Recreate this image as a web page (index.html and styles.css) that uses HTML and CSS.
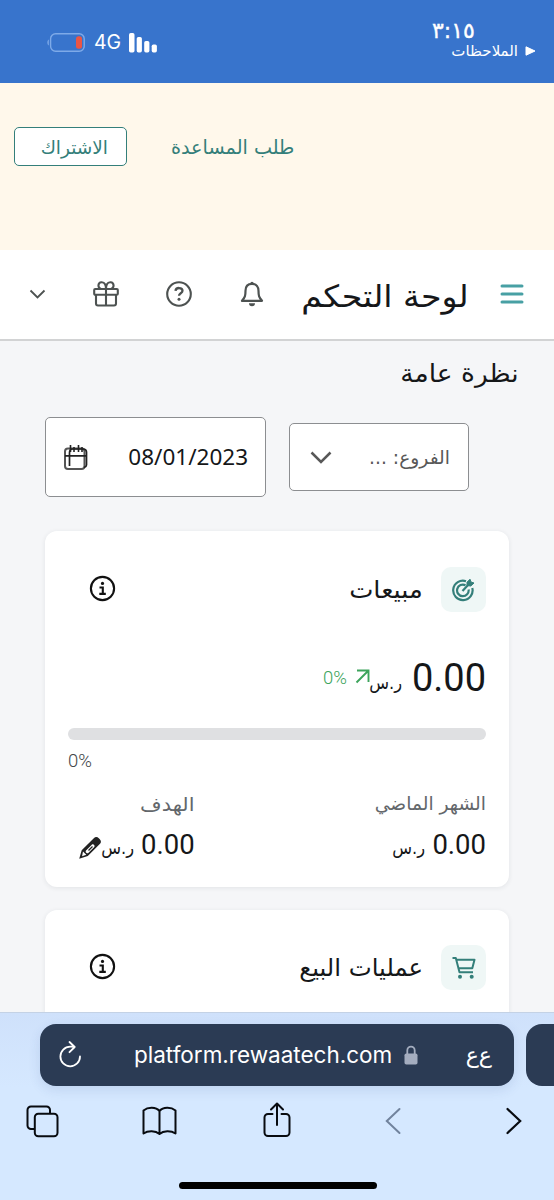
FILE: index.html
```html
<!DOCTYPE html>
<html lang="ar">
<head>
<meta charset="utf-8">
<title>لوحة التحكم</title>
<link rel="stylesheet" href="styles.css">
</head>
<body>
<div class="screen">
  <header class="status">
    <div class="signals">
      <svg width="38" height="20" viewBox="0 0 38 20"><rect x="3.600" y=".8" width="33.600" height="17.500" rx="5" fill="none" stroke="#7eaae8" stroke-width="1.400"/><path d="M1.800 6.500v6c-1.800-.6-2-5.200 0-6z" fill="#7eaae8"/><rect x="29" y="3.300" width="6" height="12.500" rx="2.500" fill="#ea5545"/></svg>
      <span class="network">4G</span>
      <svg width="29" height="20" viewBox="0 0 29 20" fill="#fff"><rect x="0" y="0" width="5.500" height="19.500" rx="1.700"/><rect x="7.700" y="4" width="5.200" height="15.500" rx="1.700"/><rect x="15.200" y="8" width="5.200" height="11.500" rx="1.700"/><rect x="22.700" y="11.500" width="5.200" height="8" rx="1.700"/></svg>
    </div>
    <div class="clock">
      <span class="time">٣:١٥</span>
      <span class="return"><span class="return-app" dir="rtl">الملاحظات</span><svg width="11" height="10" viewBox="0 0 11 10"><path d="M1 .8L10 5 1 9.200z" fill="#fff" stroke="#fff" stroke-linejoin="round"/></svg></span>
    </div>
  </header>

  <section class="banner">
    <a class="subscribe"><span class="t t-subscribe" dir="rtl">الاشتراك</span></a>
    <a class="help-link"><span class="t t-help" dir="rtl">طلب المساعدة</span></a>
  </section>

  <nav class="topbar">
    <svg class="i-chevron" width="17" height="11" viewBox="0 0 17 11"><path d="M1.500 1.500l7 7 7-7" fill="none" stroke="#4d5251" stroke-width="1.800"/></svg>
    <svg class="i-gift" width="26" height="26" viewBox="0 0 26 26" fill="none" stroke="#4d5251" stroke-width="2.100"><rect x="1.200" y="8" width="23.600" height="5.800" rx="1"/><path d="M3 14v8.500a2 2 0 002 2h16a2 2 0 002-2V14M13 8v16.500M13 8H8C4.500 7 4.500 1.500 8.500 1.200 12 1 13 4.500 13 8zm0 0h5c3.500-1 3.500-6.500-.5-6.800C14 1 13 4.500 13 8z"/></svg>
    <svg class="i-help" width="26" height="26" viewBox="0 0 26 26" fill="none" stroke="#4d5251" stroke-width="2.100"><circle cx="13" cy="13" r="11.800"/><path d="M9.500 9.800c.3-3.800 7-3.600 7 0 0 2.600-3.500 2.400-3.500 5" stroke-width="2.300"/><circle cx="13" cy="18.300" r="1.500" fill="#4d5251" stroke="none"/></svg>
    <svg class="i-bell" width="24" height="26" viewBox="0 0 24 26"><path d="M12 2.800c-4.500 0-6.500 3.200-6.500 7 0 5-.5 6.500-3.500 10h20c-3-3.500-3.500-5-3.500-10 0-3.800-2-7-6.500-7z" fill="none" stroke="#4d5251" stroke-width="2.200" stroke-linejoin="round"/><path d="M10.300 2.500a1.700 1.700 0 013.400 0zM9 22.300h6a3 3 0 01-6 0z" fill="#4d5251"/></svg>
    <h1><span class="t t-title" dir="rtl">لوحة التحكم</span></h1>
    <svg class="i-menu" width="24" height="20" viewBox="0 0 24 20"><path d="M2 2h20M2 10h20M2 18h20" stroke="#48a0a4" stroke-width="3" stroke-linecap="round"/></svg>
  </nav>

  <main>
    <h2><span class="t t-overview" dir="rtl">نظرة عامة</span></h2>
    <div class="filters">
      <div class="date">
        <svg width="26" height="27" viewBox="0 0 26 27" fill="none"><rect x="2" y="4.500" width="19.500" height="20.500" rx="3" stroke="#555" stroke-width="2"/><path d="M6.500 22V9c0-3 1-4 3-4H20c2.500 0 3.500 1 3.500 3v13c0 1.500-1 2-2.500 2.500M2 11.800h21.500" stroke="#222" stroke-width="1.700"/><path d="M7.500 1v7M11 3v5M15.500 1v7M19 3v5" stroke="#222" stroke-width="1.600"/></svg>
        <span class="date-value">08/01/2023</span>
      </div>
      <div class="branches">
        <svg width="22" height="13" viewBox="0 0 22 13"><path d="M1.500 1.500l9.500 9.500 9.500-9.500" fill="none" stroke="#585858" stroke-width="2.500"/></svg>
        <span class="t t-branches" dir="rtl">الفروع: ...</span>
      </div>
    </div>

    <article class="card sales">
      <div class="card-head">
        <svg width="27" height="27" viewBox="0 0 27 27"><circle cx="13.500" cy="13.500" r="11.600" fill="none" stroke="#111" stroke-width="2.100"/><circle cx="13.500" cy="8.400" r="1.600" fill="#111"/><path d="M10.500 12.500h3.300v6.200M10.300 18.900h6.500" fill="none" stroke="#111" stroke-width="2.100"/></svg>
        <h3><span class="t t-sales" dir="rtl">مبيعات</span></h3>
        <div class="tile"><svg width="23" height="24" viewBox="0 0 23 24" fill="none" stroke="#347f7a" stroke-width="2.200"><path d="M14 3.200A9.700 9.700 0 1020.300 10M13.500 7.200A5.800 5.800 0 1016.600 11.500M10.500 13l6-6.500"/><path d="M15 7.500V4.200l3-3 1 2.800 3 1-3.200 3z" fill="#347f7a" stroke-width="1"/></svg></div>
      </div>
      <div class="amount">
        <span class="percent up">0%</span>
        <svg width="15" height="15" viewBox="0 0 15 15"><path d="M2 1.500h11.500V13M13.500 1.500l-12 12" fill="none" stroke="#3da45c" stroke-width="1.900"/></svg>
        <span class="t t-currency big" dir="rtl">ر.س</span>
        <span class="number">0.00</span>
      </div>
      <div class="progress"></div>
      <div class="percent done">0%</div>
      <div class="stats">
        <div class="stat goal">
          <div class="label"><span class="t t-goal" dir="rtl">الهدف</span></div>
          <div class="value">
            <svg width="24" height="24" viewBox="0 0 24 24"><path d="M1.200 22.800l2.500-8.600L15.800 2.200c1.500-1.500 3.500-1.500 5 0l1 1c1.500 1.500 1.500 3.300 0 4.800L9.800 20z" fill="#222"/><path d="M5 15.500l3.300 3.300-4.200 1.500z" fill="#fff"/><path d="M8 14.500l6-6c1.200-1 3.500 1 2.300 2.500l-6 6c-1.500 1.200-3.500-1-2.300-2.500z" fill="#fff"/><path d="M10.500 14.500l4-4" stroke="#222" stroke-width="1.300"/></svg>
            <span class="t t-currency" dir="rtl">ر.س</span><span class="number">0.00</span>
          </div>
        </div>
        <div class="stat">
          <div class="label"><span class="t t-month" dir="rtl">الشهر الماضي</span></div>
          <div class="value"><span class="t t-currency" dir="rtl">ر.س</span><span class="number">0.00</span></div>
        </div>
      </div>
    </article>

    <article class="card orders">
      <div class="card-head">
        <svg width="27" height="27" viewBox="0 0 27 27"><circle cx="13.500" cy="13.500" r="11.600" fill="none" stroke="#111" stroke-width="2.100"/><circle cx="13.500" cy="8.400" r="1.600" fill="#111"/><path d="M10.500 12.500h3.300v6.200M10.300 18.900h6.500" fill="none" stroke="#111" stroke-width="2.100"/></svg>
        <h3><span class="t t-orders" dir="rtl">عمليات البيع</span></h3>
        <div class="tile"><svg width="24" height="24" viewBox="0 0 24 24" fill="none" stroke="#347f7a" stroke-width="2"><path d="M.5 2h3.300l3.700 14.200h13.500M4.600 3.800h17.900L20.300 12.300H6.600" stroke-linejoin="round"/><circle cx="8" cy="20.800" r="2" fill="#347f7a" stroke="none"/><circle cx="19.700" cy="20.800" r="2" fill="#347f7a" stroke="none"/></svg></div>
      </div>
    </article>
  </main>

  <footer class="browser">
    <div class="tabs">
      <div class="address">
        <svg class="i-reload" width="23" height="27" viewBox="0 0 23 27"><path d="M13.500 5.700H11.200A9.800 9.800 0 1021 15.500M10.500 1l5.200 5-5.200 5.200" fill="none" stroke="#fff" stroke-width="1.800" stroke-linecap="round" stroke-linejoin="round"/></svg>
        <span class="url">platform.rewaatech.com</span>
        <svg class="i-lock" width="14" height="20" viewBox="0 0 14 20"><rect x=".5" y="8.500" width="13" height="11" rx="1.800" fill="#a4adbf"/><path d="M3.300 9V5.500a3.700 3.900 0 017.400 0V9" fill="none" stroke="#a4adbf" stroke-width="1.800"/></svg>
        <span class="t t-reader" dir="rtl">ع‌ع</span>
      </div>
      <div class="next-tab"></div>
    </div>
    <div class="tools">
      <svg class="i-tabs" width="33" height="33" viewBox="0 0 33 33" fill="none" stroke="#080b10" stroke-width="2"><path d="M8.800 24H5a3.500 3.500 0 01-3.500-3.500V5A3.500 3.500 0 015 1.500h15.500A3.500 3.500 0 0124 5v3.800"/><rect x="8.800" y="8.800" width="22.700" height="22.500" rx="3.500"/></svg>
      <svg class="i-book" width="35" height="30" viewBox="0 0 35 30" fill="none" stroke="#080b10" stroke-width="2" stroke-linejoin="round"><path d="M17.500 5C14 .8 6 .8 1.500 4.500v23c4.500-3 12-3 16 .5 4-3.500 11.500-3.500 16-.5v-23C29 .8 21 .8 17.500 5zM17.500 5v23"/></svg>
      <svg class="i-share" width="28" height="36" viewBox="0 0 28 36" fill="none" stroke="#080b10" stroke-width="2" stroke-linecap="round" stroke-linejoin="round"><path d="M9.500 12H5a3.500 3.500 0 00-3.500 3.500v15A3.500 3.500 0 005 34h18a3.500 3.500 0 003.500-3.500v-15A3.500 3.500 0 0023 12h-4.500M14 23V1.800M8 7.500l6-6 6 6"/></svg>
      <svg class="i-back" width="16" height="28" viewBox="0 0 16 28"><path d="M14.500 2L1.800 14l12.700 12" fill="none" stroke="#71839d" stroke-width="2" stroke-linecap="round"/></svg>
      <svg class="i-forward" width="16" height="28" viewBox="0 0 16 28"><path d="M1.500 2l12.700 12L1.500 26" fill="none" stroke="#080b10" stroke-width="2.200" stroke-linecap="round"/></svg>
    </div>
    <div class="home"></div>
  </footer>
</div>
</body>
</html>
```
FILE: styles.css
```css
* { box-sizing: border-box; }
body { margin: 0; font-family: Roboto, "DejaVu Sans", sans-serif; color: #151719; direction: ltr; }
h1, h2, h3 { margin: 0; font-weight: 400; }
svg { display: block; flex: none; }
.screen { width: 554px; height: 1200px; display: flex; flex-direction: column; overflow: hidden; background: #f5f6f8; }
.t { display: inline-block; white-space: nowrap; font-family: "DejaVu Sans", sans-serif; transform-origin: right center; }

.status { height: 83px; flex: none; background: #3874cc; color: #fff; display: flex; justify-content: space-between; padding: 0 18px 0 47px; }
.signals { display: flex; padding-top: 33px; }
.network { font: 19.500px/19px Inter, sans-serif; width: 44px; padding-left: 9px; }
.clock { display: flex; flex-direction: column; align-items: flex-start; width: 104px; padding-top: 18px; }
.time { font: 22px/25px "DejaVu Sans", sans-serif; white-space: nowrap; -webkit-text-stroke: .4px #fff; }
.return { display: flex; align-items: center; align-self: flex-end; gap: 7px; line-height: 16px; }
.return-app { font: 15px/16px "DejaVu Sans", sans-serif; }

.banner { height: 167px; flex: none; background: #fff8eb; color: #347f7a; display: flex; align-items: flex-start; padding: 44px 0 0 14px; gap: 44px; }
.subscribe { width: 113px; height: 39px; border: 1.500px solid #347f7a; border-radius: 5px; background: #fff; display: flex; align-items: center; justify-content: flex-end; padding: 2px 18px 0 0; }
.help-link { height: 39px; display: flex; align-items: center; padding-top: 2px; }
.t-subscribe { font-size: 18.500px; }
.t-help { font-size: 19.200px; }

.topbar { height: 91px; flex: none; background: #fff; border-bottom: 2px solid #d2d3d4; display: flex; align-items: center; padding: 0 30px 1px 29px; }
.i-gift { margin-left: 47px; }
.i-help { margin-left: 47px; }
.i-bell { margin-left: 48px; }
.topbar h1 { width: 216px; padding: 3px 11px 0 0; text-align: right; }
.i-menu { margin-left: 20px; }
.t-title { font-size: 30.500px; transform: scaleX(1.09); }

main { flex: 1; min-height: 0; overflow: hidden; padding: 0 45px; }
main h2 { height: 76px; line-height: 66px; text-align: right; margin-right: -10px; }
.t-overview { font-size: 25px; transform: scaleX(1.06); }
.filters { display: flex; align-items: center; gap: 23px; height: 80px; }
.date { width: 221px; height: 80px; border: 1.500px solid #8c8e91; border-radius: 5px; background: #fff; display: flex; align-items: center; justify-content: space-between; padding: 0 17px; }
.date-value { font: 22.500px/30px "Noto Sans", sans-serif; }
.branches { width: 180px; height: 68px; border: 1.500px solid #8c8e91; border-radius: 5px; background: #fff; color: #585858; display: flex; align-items: center; justify-content: space-between; padding: 0 18px 0 20px; }
.t-branches { font-size: 18.700px; }

.card { background: #fff; border-radius: 12px; box-shadow: 0 1px 5px rgba(30, 40, 60, .09); width: 464px; }
.sales { height: 356px; margin-top: 34px; padding: 36px 23px 0; }
.orders { height: 160px; margin-top: 23px; padding: 35px 23px 0; }
.card-head { display: flex; align-items: center; height: 45px; padding-left: 21px; }
.card-head > svg { margin-top: -2px; }
.card-head h3 { flex: 1; text-align: right; padding-right: 18px; }
.tile { width: 45px; height: 45px; border-radius: 10px; background: #eff7f6; display: flex; align-items: center; justify-content: center; }
.t-sales { font-size: 24px; transform: scaleX(1.07); }
.t-orders { font-size: 24px; transform: scaleX(1.015); }
.amount { height: 116px; display: flex; justify-content: flex-end; padding-top: 36px; }
.amount .number { font: 38px/60px Roboto, sans-serif; }
.amount svg { margin: 21px 0 0 8px; }
.t-currency { width: 32px; font-size: 18px; transform: scaleX(.9); }
.t-currency.big { line-height: 69px; margin-right: 10px; }
.percent { font: 18.500px/24px Roboto, sans-serif; font-weight: 300; }
.up { color: #3da45c; padding-top: 18px; }
.progress { height: 12px; border-radius: 6px; background: #dfe0e2; }
.done { color: #424648; padding-top: 9px; }
.stats { display: flex; justify-content: space-between; padding: 16px 0 0 10px; }
.label { text-align: right; color: #63676b; height: 30px; line-height: 30px; }
.t-goal { font-size: 19px; transform: scaleX(1.1); }
.t-month { font-size: 18.700px; }
.value { display: flex; align-items: center; justify-content: flex-end; height: 52px; }
.value svg { margin-top: 6px; }
.value .t-currency { margin-top: 4px; }
.value .number { font: 27.500px/50px Roboto, sans-serif; margin-left: 7px; }

.browser { height: 188px; flex: none; background: linear-gradient(#cfe1fb, #d5e8ff 40%); border-top: 1px solid #c4d2e5; padding-top: 11px; }
.tabs { display: flex; gap: 12px; padding-left: 40px; }
.address { width: 474px; height: 62px; flex: none; border-radius: 16px; background: #2b3b54; color: #fff; display: flex; align-items: center; padding: 0 22px 0 19px; box-shadow: 0 4px 12px rgba(50, 80, 140, .13); }
.next-tab { width: 28px; height: 62px; border-radius: 16px 0 0 16px; background: #2b3b54; }
.url { font: 22.500px/30px Inter, sans-serif; width: 260px; margin-left: 52px; white-space: nowrap; }
.i-reload { margin-top: -2px; }
.i-lock { margin-left: 10px; }
.t-reader { margin-left: auto; font-size: 22px; }
.tools { display: flex; align-items: center; height: 70px; padding-left: 26px; }
.i-book { margin-left: 83px; }
.i-share { margin: -2px 0 0 86px; }
.i-back { margin-left: 94px; }
.i-forward { margin-left: 105px; }
.home { width: 198px; height: 7px; border-radius: 4px; background: #000; margin: 26px 0 0 179px; }
```
